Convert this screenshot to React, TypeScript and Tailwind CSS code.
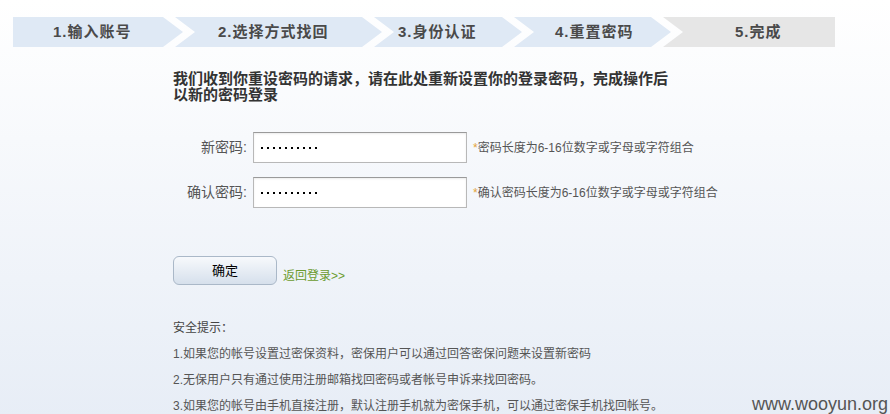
import React from 'react';

const steps = [
  {
    label: '1.输入账号',
    cls: 'w-[170px] pl-[40px] bg-[#dfe9f5] [clip-path:polygon(0_0,calc(100%_-_20px)_0,100%_50%,calc(100%_-_20px)_100%,0_100%)]',
  },
  {
    label: '2.选择方式找回',
    cls: 'w-[207px] ml-[-8px] pl-[43px] bg-[#dfe9f5] [clip-path:polygon(0_0,calc(100%_-_20px)_0,100%_50%,calc(100%_-_20px)_100%,0_100%,20px_50%)]',
  },
  {
    label: '3.身份认证',
    cls: 'w-[148px] ml-[-8px] pl-[24px] bg-[#dfe9f5] [clip-path:polygon(0_0,calc(100%_-_20px)_0,100%_50%,calc(100%_-_20px)_100%,0_100%,20px_50%)]',
  },
  {
    label: '4.重置密码',
    cls: 'w-[157px] ml-[-8px] pl-[41px] bg-[#dfe9f5] [clip-path:polygon(0_0,calc(100%_-_20px)_0,100%_50%,calc(100%_-_20px)_100%,0_100%,20px_50%)]',
  },
  {
    label: '5.完成',
    cls: 'w-[172px] ml-[-8px] pl-[72px] bg-[#e6e6e6] [clip-path:polygon(0_0,100%_0,100%_100%,0_100%,20px_50%)]',
  },
];

const tips = [
  '1.如果您的帐号设置过密保资料，密保用户可以通过回答密保问题来设置新密码',
  '2.无保用户只有通过使用注册邮箱找回密码或者帐号申诉来找回密码。',
  '3.如果您的帐号由手机直接注册，默认注册手机就为密保手机，可以通过密保手机找回帐号。',
];

function PasswordRow({ label, hint }: { label: string; hint: string }) {
  return (
    <div className="flex items-center h-[31px]">
      <span className="w-[75px] text-right text-[14px] text-[#555]">{label}</span>
      <div className="ml-[6px] w-[214px] h-[31px] bg-white border border-[#b8b8b8] border-t-[#9a9a9a] shadow-[inset_0_1px_2px_rgba(0,0,0,0.08)] flex items-center pl-[7px]">
        <div className="flex gap-[4px]">
          {Array.from({ length: 10 }).map((_, i) => (
            <span key={i} className="w-[2px] h-[2px] bg-black" />
          ))}
        </div>
      </div>
      <span className="ml-[6px] text-[12px] text-[#555]">
        <span className="text-[#e3a43a]">*</span>
        {hint}
      </span>
    </div>
  );
}

export default function App() {
  return (
    <div
      className="relative min-h-[414px] bg-gradient-to-b from-white to-[#e7edf6] overflow-hidden"
      style={{ fontFamily: '"Liberation Sans", "Noto Sans CJK SC", sans-serif' }}
    >
      {/* Steps */}
      <div className="flex ml-[13px] pt-[17px]">
        {steps.map((s) => (
          <div
            key={s.label}
            className={`h-[30px] flex items-center text-[15px] font-bold tracking-[1px] text-[#4a4a4a] ${s.cls}`}
          >
            {s.label}
          </div>
        ))}
      </div>

      <div className="pl-[173px]">
        <p className="mt-[24px] w-[500px] text-[15px] leading-[16px] font-bold text-[#333]">
          我们收到你重设密码的请求，请在此处重新设置你的登录密码，完成操作后以新的密码登录
        </p>

        <div className="ml-[-1px] mt-[29px] flex flex-col gap-[14px]">
          <PasswordRow label="新密码:" hint="密码长度为6-16位数字或字母或字符组合" />
          <PasswordRow label="确认密码:" hint="确认密码长度为6-16位数字或字母或字符组合" />
        </div>

        <div className="mt-[48px] flex items-end">
          <button className="w-[104px] h-[29px] rounded-[6px] border border-[#aab8c8] bg-gradient-to-b from-[#f7f9fc] to-[#d6e0ec] text-[13px] text-black">
            确定
          </button>
          <a className="ml-[6px] text-[12px] text-[#6b9b2f] leading-[16px] mb-[1px]">返回登录&gt;&gt;</a>
        </div>

        <div className="mt-[30px] text-[12px] leading-[26px] text-[#555]">
          <p className="text-[#444]">安全提示：</p>
          {tips.map((t) => (
            <p key={t}>{t}</p>
          ))}
        </div>
      </div>

      <span className="absolute right-[2px] bottom-[1px] text-[18px] text-[#555]">www.wooyun.org</span>
    </div>
  );
}
